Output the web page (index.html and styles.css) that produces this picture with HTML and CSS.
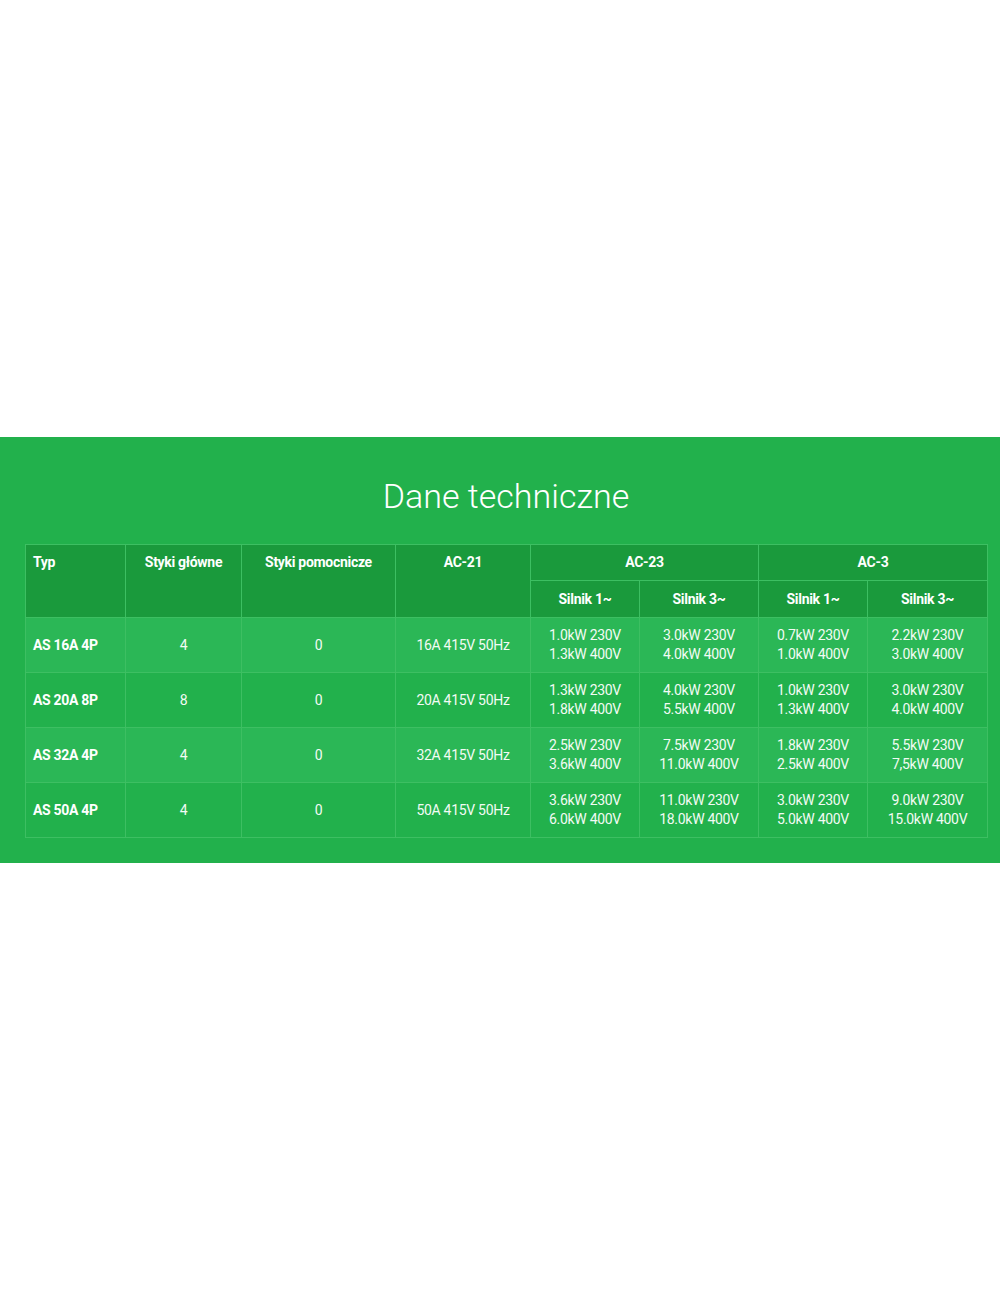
FILE: index.html
```html
<!DOCTYPE html>
<html lang="pl">
<head>
<meta charset="utf-8">
<title>Dane techniczne</title>
<link rel="stylesheet" href="styles.css">
</head>
<body>
<section class="specs">
  <div class="specs-inner">
    <h2 class="specs-title">Dane techniczne</h2>
    <table class="spec-table">
      <colgroup>
        <col class="c1"><col class="c2"><col class="c3"><col class="c4">
        <col class="c5"><col class="c6"><col class="c7"><col class="c8">
      </colgroup>
      <thead>
        <tr>
          <th rowspan="2" class="left">Typ</th>
          <th rowspan="2">Styki główne</th>
          <th rowspan="2">Styki pomocnicze</th>
          <th rowspan="2">AC-21</th>
          <th colspan="2">AC-23</th>
          <th colspan="2">AC-3</th>
        </tr>
        <tr class="sub">
          <th>Silnik 1~</th>
          <th>Silnik 3~</th>
          <th>Silnik 1~</th>
          <th>Silnik 3~</th>
        </tr>
      </thead>
      <tbody>
        <tr>
          <td class="name">AS 16A 4P</td>
          <td>4</td>
          <td>0</td>
          <td>16A 415V 50Hz</td>
          <td>1.0kW 230V<br>1.3kW 400V</td>
          <td>3.0kW 230V<br>4.0kW 400V</td>
          <td>0.7kW 230V<br>1.0kW 400V</td>
          <td>2.2kW 230V<br>3.0kW 400V</td>
        </tr>
        <tr>
          <td class="name">AS 20A 8P</td>
          <td>8</td>
          <td>0</td>
          <td>20A 415V 50Hz</td>
          <td>1.3kW 230V<br>1.8kW 400V</td>
          <td>4.0kW 230V<br>5.5kW 400V</td>
          <td>1.0kW 230V<br>1.3kW 400V</td>
          <td>3.0kW 230V<br>4.0kW 400V</td>
        </tr>
        <tr>
          <td class="name">AS 32A 4P</td>
          <td>4</td>
          <td>0</td>
          <td>32A 415V 50Hz</td>
          <td>2.5kW 230V<br>3.6kW 400V</td>
          <td>7.5kW 230V<br>11.0kW 400V</td>
          <td>1.8kW 230V<br>2.5kW 400V</td>
          <td>5.5kW 230V<br>7,5kW 400V</td>
        </tr>
        <tr>
          <td class="name">AS 50A 4P</td>
          <td>4</td>
          <td>0</td>
          <td>50A 415V 50Hz</td>
          <td>3.6kW 230V<br>6.0kW 400V</td>
          <td>11.0kW 230V<br>18.0kW 400V</td>
          <td>3.0kW 230V<br>5.0kW 400V</td>
          <td>9.0kW 230V<br>15.0kW 400V</td>
        </tr>
      </tbody>
    </table>
  </div>
</section>
</body>
</html>
```
FILE: styles.css
```css
html, body {
  margin: 0;
  padding: 0;
  background: #ffffff;
  font-family: Roboto, "Liberation Sans", sans-serif;
}

.specs {
  margin-top: 437px;
  background: #22b14c;
  padding: 38px 0 25px;
}

.specs-inner {
  padding: 0 13px 0 25px;
}

.specs-title {
  margin: 0 0 27px;
  text-align: center;
  font-weight: 300;
  font-size: 34px;
  line-height: 42px;
  color: #ffffff;
}

.spec-table {
  width: 962px;
  table-layout: fixed;
  border-collapse: collapse;
  color: #ffffff;
  font-size: 14px;
  line-height: 19px;
  letter-spacing: -0.3px;
}

.c1 { width: 100px; }
.c2 { width: 116px; }
.c3 { width: 154px; }
.c4 { width: 135px; }
.c5 { width: 109px; }
.c6 { width: 119px; }
.c7 { width: 109px; }
.c8 { width: 120px; }

.spec-table th,
.spec-table td {
  border: 1px solid #3dbf62;
  padding: 8px 8px;
  text-align: center;
}

.spec-table th {
  background: #1a9a3c;
  font-weight: 700;
  vertical-align: top;
}

.spec-table th.left {
  text-align: left;
  padding-left: 7px;
}

.spec-table tr.sub th {
  padding-top: 9px;
}

.spec-table td {
  vertical-align: middle;
  color: #f2fbf4;
}

.spec-table tbody tr:nth-child(odd) td {
  background: #2bb756;
}

.spec-table tbody tr:nth-child(even) td {
  background: #22b14c;
}

.spec-table td.name {
  text-align: left;
  padding-left: 7px;
  font-weight: 700;
  color: #ffffff;
}
```
